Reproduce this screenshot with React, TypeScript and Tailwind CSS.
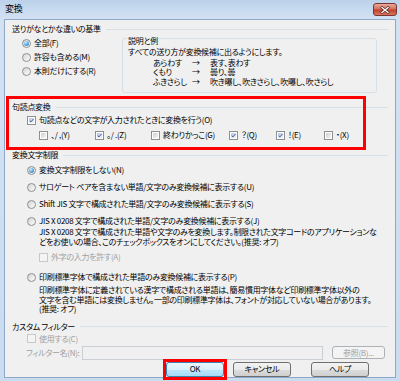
import React from "react";

const ui = "font-['Noto_Sans_CJK_JP',sans-serif] [font-feature-settings:'palt'] text-[8px] leading-[10px] tracking-[-0.3px] text-black";

function Radio({ checked = false }: { checked?: boolean }) {
  return (
    <span className="flex h-[9px] w-[9px] shrink-0 items-center justify-center rounded-full border border-[#8e8f8f] bg-[linear-gradient(135deg,#d4d4d4,#fdfdfd)]">
      {checked && (
        <span className="h-[5px] w-[5px] rounded-full bg-[radial-gradient(circle_at_35%_30%,#c8eefe,#2a8ad4_75%)]" />
      )}
    </span>
  );
}

function Check({ checked = false, disabled = false }: { checked?: boolean; disabled?: boolean }) {
  return (
    <span
      className={
        "flex h-[9px] w-[9px] shrink-0 border p-px " +
        (disabled ? "border-[#c8c8c8] bg-[#f4f4f4]" : "border-[#8f8f8f] bg-white")
      }
    >
      <span
        className={
          "flex h-full w-full items-center justify-center " +
          (disabled
            ? "bg-[#f4f4f4]"
            : checked
            ? "bg-[linear-gradient(135deg,#b7cbe4,#eef4fb)]"
            : "bg-[linear-gradient(135deg,#cfcfcf,#f6f6f6)]")
        }
      >
        {checked && (
          <svg viewBox="0 0 7 7" className="h-[7px] w-[7px]">
            <path d="M1 3.6 L2.8 5.4 L6.2 1.4" fill="none" stroke="#3f52a0" strokeWidth="1.4" />
          </svg>
        )}
      </span>
    </span>
  );
}

function Header({ label }: { label: string }) {
  return (
    <div className="flex h-[10px] items-center">
      <span className="whitespace-nowrap">{label}</span>
      <span className="ml-[5px] h-px flex-1 bg-[#d5dfe5]" />
    </div>
  );
}

function RadioRow({ label, checked = false }: { label: string; checked?: boolean }) {
  return (
    <div className="flex h-[12px] items-center gap-[3px] whitespace-nowrap">
      <Radio checked={checked} />
      <span>{label}</span>
    </div>
  );
}

function CheckRow({ label, checked = false, disabled = false, className = "" }: { label: string; checked?: boolean; disabled?: boolean; className?: string }) {
  return (
    <div className={"flex h-[12px] items-center gap-[3px] whitespace-nowrap " + className}>
      <Check checked={checked} disabled={disabled} />
      <span className={disabled ? "text-[#a0a0a0]" : ""}>{label}</span>
    </div>
  );
}

function Button({ label, primary = false, disabled = false, className = "" }: { label: string; primary?: boolean; disabled?: boolean; className?: string }) {
  let look = "border-[#707070] bg-[linear-gradient(180deg,#f2f2f2,#ebebeb_50%,#dddddd_50%,#cfcfcf)]";
  if (primary) look = "border-[#3c7fb1] bg-[linear-gradient(180deg,#eaf6fd,#d9f0fc_50%,#bee6fd_50%,#a7d9f5)]";
  if (disabled) look = "border-[#adb2b5] bg-[#f4f4f4] text-[#a0a0a0]";
  return (
    <div className={"flex items-center justify-center rounded-[3px] border " + look + " " + className}>
      {label}
    </div>
  );
}

export default function App() {
  return (
    <div className={"flex h-[381px] w-[400px] flex-col overflow-hidden bg-[linear-gradient(180deg,#bcd2ea,#d3e2f3_19px,#c9dcf0)] " + ui}>
      {/* title bar */}
      <div className="flex h-[19px] shrink-0 items-start pl-[5px] pr-[3px]">
        <span className="mt-[4px] text-[9px]">変換</span>
        <div className="ml-auto mt-[3px] flex h-[13px] w-[24px] items-center justify-center rounded-[3px] border border-[#7a3431] bg-[linear-gradient(180deg,#e9a99c,#d3705e_45%,#c0402b_55%,#d8775f)]">
          <svg viewBox="0 0 10 8" className="h-[8px] w-[10px]">
            <path d="M2 1.5 L8 6.5 M8 1.5 L2 6.5" stroke="#4a1f1c" strokeWidth="2.6" strokeLinecap="square" />
            <path d="M2 1.5 L8 6.5 M8 1.5 L2 6.5" stroke="#ffffff" strokeWidth="1.4" strokeLinecap="square" />
          </svg>
        </div>
      </div>

      {/* client area */}
      <div className="mx-[4px] mb-[3px] flex flex-1 flex-col border border-[#8fa8c7] bg-[#f0f0f0] px-[7px] pt-[4px]">
        {/* 送りがな */}
        <Header label="送りがなとかな違いの基準" />
        <div className="flex">
          <div className="mt-[3px] flex w-[110px] flex-col gap-[2px] pl-[10px]">
            <RadioRow label="全部(F)" checked />
            <RadioRow label="許容も含める(M)" />
            <RadioRow label="本則だけにする(R)" />
          </div>
          <div className="relative mt-[4px] h-[55px] w-[255px] rounded-[3px] border border-[#d5dfe5] pl-[5px] pt-[8px] leading-[9.5px]">
            <span className="absolute left-[4px] top-[-3px] bg-[#f0f0f0] px-px leading-[10px]">説明と例</span>
            <div className="whitespace-nowrap">すべての送り方が変換候補に出るようにします。</div>
            <div className="ml-[25px] mt-px grid grid-cols-[39px_18px_auto] whitespace-nowrap">
              <span>あらわす</span>
              <span>→</span>
              <span>表す、表わす</span>
              <span>くもり</span>
              <span>→</span>
              <span>曇り、曇</span>
              <span>ふきさらし</span>
              <span>→</span>
              <span>吹き曝し、吹きさらし、吹曝し、吹さらし</span>
            </div>
          </div>
        </div>

        {/* 句読点変換 */}
        <div className="relative pt-[9px]">
          <span className="pointer-events-none absolute left-[-6px] top-[3px] h-[54px] w-[360px] border-[3px] border-[#ff0000]" />
          <Header label="句読点変換" />
          <CheckRow className="mt-[2px] pl-[15px]" label="句読点などの文字が入力されたときに変換を行う(O)" checked />
          <div className="mt-[3px] flex pl-[27px]">
            <CheckRow className="w-[56px]" label="、/ ,(Y)" />
            <CheckRow className="w-[56px]" label="。/ .(Z)" checked />
            <CheckRow className="w-[78px]" label="終わりかっこ(G)" />
            <CheckRow className="w-[47px]" label="？(Q)" checked />
            <CheckRow className="w-[48px]" label="！(E)" checked />
            <CheckRow label="・(X)" />
          </div>
        </div>

        {/* 変換文字制限 */}
        <div className="mt-[9px]">
          <Header label="変換文字制限" />
          <div className="mt-[4px] flex flex-col gap-[5px] pl-[15px]">
            <RadioRow label="変換文字制限をしない(N)" checked />
            <RadioRow label="サロゲート ペアを含まない単語/文字のみ変換候補に表示する(U)" />
            <RadioRow label="Shift JIS 文字で構成された単語/文字のみ変換候補に表示する(S)" />
            <RadioRow label="JIS X 0208 文字で構成された単語/文字のみ変換候補に表示する(J)" />
          </div>
          <div className="whitespace-nowrap pl-[27px] leading-[9.5px]">
            <div>JIS X 0208 文字で構成された単語や文字のみを変換します。制限された文字コードのアプリケーションな</div>
            <div>どをお使いの場合、このチェックボックスをオンにしてください。(推奨: オフ)</div>
          </div>
          <CheckRow className="mt-[5px] pl-[27px]" label="外字の入力を許す(A)" disabled />
          <div className="mt-[8px] pl-[15px]">
            <RadioRow label="印刷標準字体で構成された単語のみ変換候補に表示する(P)" />
          </div>
          <div className="mt-[2px] whitespace-nowrap pl-[27px] leading-[9.5px]">
            <div>印刷標準字体に定義されている漢字で構成される単語は、簡易慣用字体など印刷標準字体以外の</div>
            <div>文字を含む単語には変換しません。一部の印刷標準字体は、フォントが対応していない場合があります。</div>
            <div>(推奨: オフ)</div>
          </div>
        </div>

        {/* カスタム フィルター */}
        <div className="mt-[8px]">
          <Header label="カスタム フィルター" />
          <CheckRow className="mt-px h-[10px] pl-[15px]" label="使用する(C)" disabled />
          <div className="mt-px flex h-[14px] items-center pl-[14px]">
            <span className="w-[56px] whitespace-nowrap text-[#a0a0a0]">フィルター名(N):</span>
            <div className="h-[14px] w-[241px] border border-[#c9cfd4] bg-[#f0f0f0]" />
            <Button className="ml-[9px] h-[13px] w-[53px]" label="参照(B)..." disabled />
          </div>
          <div className="mt-[2px] flex pl-[154px]">
            <div className="relative">
              <span className="pointer-events-none absolute -inset-[3px] border-[3px] border-[#ff0000]" />
              <Button className="h-[15px] w-[58px]" label="OK" primary />
            </div>
            <Button className="ml-[9px] h-[15px] w-[58px]" label="キャンセル" />
            <Button className="ml-[20px] h-[15px] w-[58px]" label="ヘルプ" />
          </div>
        </div>
      </div>
    </div>
  );
}
